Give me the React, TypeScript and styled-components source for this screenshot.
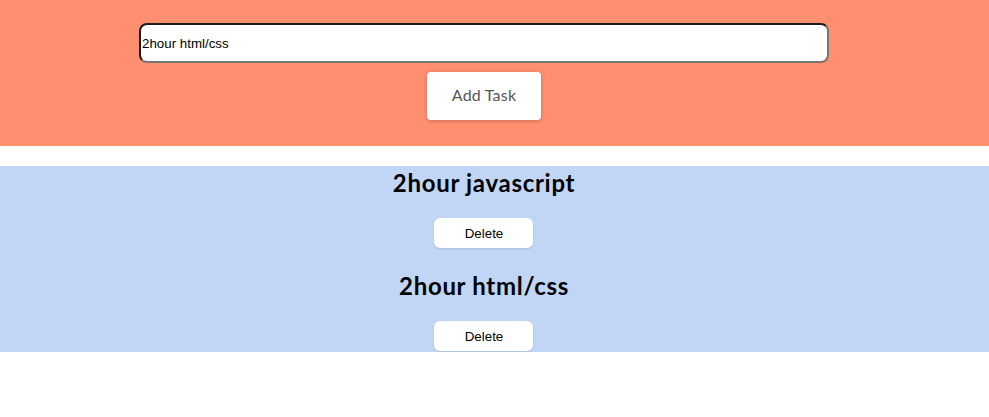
import React from "react";
import styled, { createGlobalStyle } from "styled-components";

const Global = createGlobalStyle`
  html, body { margin: 0; padding: 0; background: #fff; }
  body { font-family: "Liberation Sans", Arial, sans-serif; }
`;

const Header = styled.header`
  background: #ff8f6f;
  padding: 23px 21px 26px 0;
  display: flex;
  flex-direction: column;
  align-items: center;
  gap: 9px;
`;

const TaskInput = styled.input`
  box-sizing: border-box;
  width: 690px;
  height: 40px;
  padding: 0 1px;
  border-style: solid;
  border-width: 2px;
  border-color: #1c1c1c #767676 #767676 #1c1c1c;
  border-radius: 8px;
  background: #fff;
  font-family: "Liberation Sans", Arial, sans-serif;
  font-size: 13.33px;
  color: #000;
  outline: none;
`;

const AddButton = styled.button`
  width: 114px;
  height: 48px;
  padding: 0 0 3px;
  border: none;
  border-radius: 4px;
  background: #fff;
  box-shadow: 0 1px 4px rgba(0, 0, 0, 0.22);
  font-family: Lato, "Noto Sans", sans-serif;
  font-size: 16px;
  letter-spacing: 0.2px;
  color: #555;
  cursor: pointer;
`;

const List = styled.section`
  margin-top: 20px;
  background: #c1d5f4;
  padding: 1px 21px 1px 0;
  display: flex;
  flex-direction: column;
  align-items: center;
  gap: 22px;
`;

const Item = styled.div`
  display: flex;
  flex-direction: column;
  align-items: center;
  gap: 19px;
`;

const Title = styled.h2`
  margin: 0;
  font-family: Lato, "Noto Sans", sans-serif;
  font-weight: 700;
  font-size: 24px;
  line-height: 32px;
  letter-spacing: 0.7px;
  color: #000;
`;

const DeleteButton = styled.button`
  width: 99px;
  height: 30px;
  border: none;
  border-radius: 6px;
  background: #fff;
  box-shadow: 0 1px 2px rgba(0, 0, 0, 0.12);
  font-family: "Liberation Sans", Arial, sans-serif;
  font-size: 13.33px;
  color: #000;
  cursor: pointer;
`;

const tasks = ["2hour javascript", "2hour html/css"];

export default function App() {
  return (
    <>
      <Global />
      <Header>
        <TaskInput defaultValue="2hour html/css" />
        <AddButton>Add Task</AddButton>
      </Header>
      <List>
        {tasks.map((t) => (
          <Item key={t}>
            <Title>{t}</Title>
            <DeleteButton>Delete</DeleteButton>
          </Item>
        ))}
      </List>
    </>
  );
}
